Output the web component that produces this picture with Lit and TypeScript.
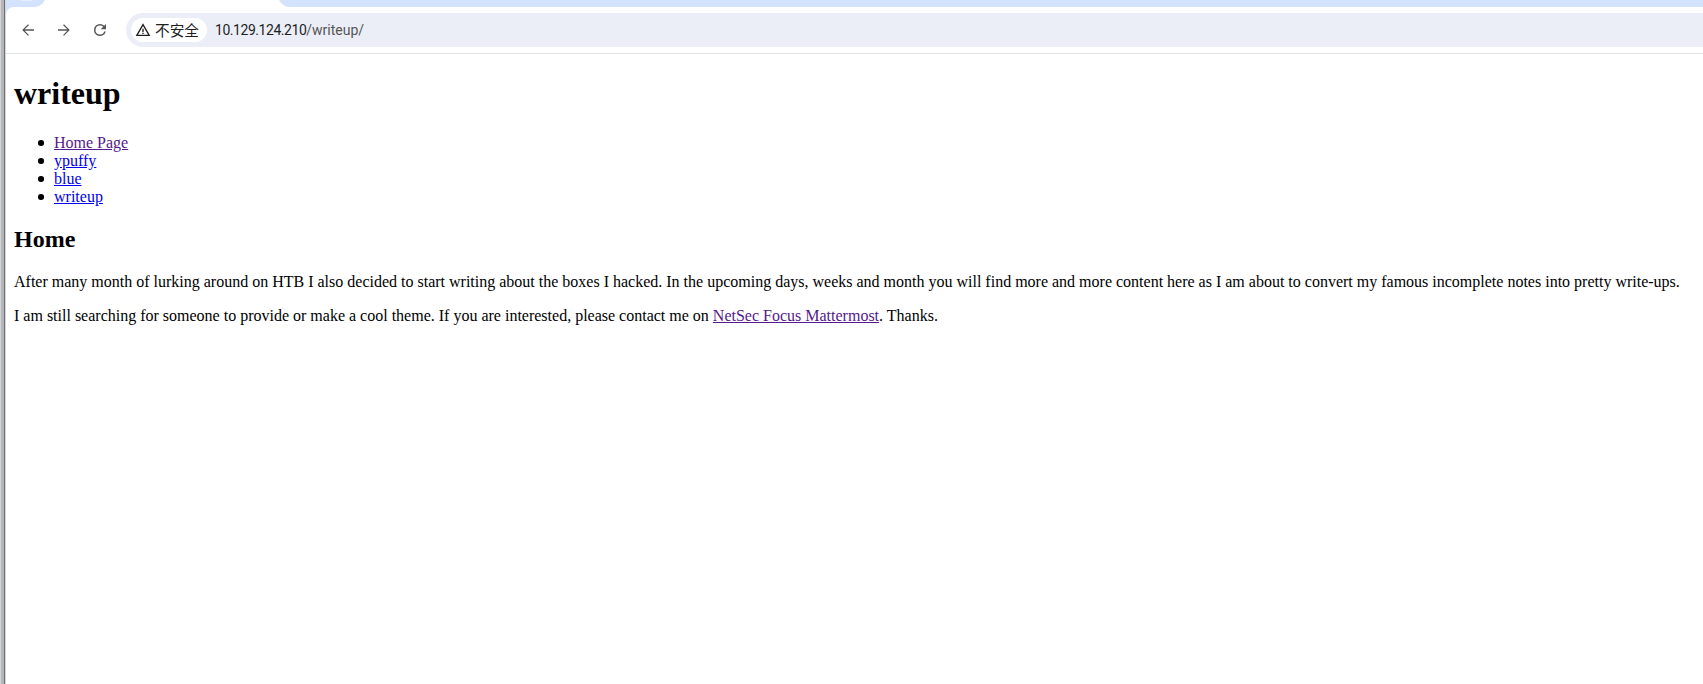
import { LitElement, html, css } from "lit";
import { customElement } from "lit/decorators.js";

@customElement("app-root")
export class AppRoot extends LitElement {
  static styles = css`
    :host { display: flex; height: 684px; width: 1703px; overflow: hidden; background: #fff; font-family: "Liberation Serif", serif; font-size: 16px; color: #000; }
    .edge { width: 6px; flex: none; display: flex; }
    .edge i { display: block; }
    .edge .a { width: 1px; background: #d4d5d9; }
    .edge .b { width: 3px; background: #b5b6ba; }
    .edge .c { width: 1px; background: #6e6f73; }
    .edge .d { width: 1px; background: #d6d7db; }
    .win { flex: 1; min-width: 0; display: flex; flex-direction: column; }
    .tabs { height: 7px; flex: none; background: #fff; position: relative; }
    .clip { position: absolute; inset: 0; overflow: hidden; }
    .tab-l { position: absolute; left: 0; top: -12px; width: 40px; height: 19px; background: #d3e3fd; border-radius: 0 0 12px 0; }
    .tab-l::after { content: ""; position: absolute; left: 12px; top: 0; width: 17px; height: 13px; background: #e8eefb; border-radius: 0 0 5px 5px; }
    .tab-r { position: absolute; left: 272px; right: 0; top: -12px; height: 19px; background: #d3e3fd; border-radius: 0 0 0 12px; }
    .corner { position: absolute; left: 0; top: 7px; width: 8px; height: 8px; background: radial-gradient(circle at 100% 100%, #fff 7.5px, #d3e3fd 8.5px); }
    .bar { height: 47px; flex: none; box-sizing: border-box; display: flex; align-items: center; padding: 0 0 0 4px; border-bottom: 1px solid #e1e2e5; }
    .nav { width: 36px; height: 36px; display: flex; align-items: center; justify-content: center; flex: none; }
    .nav svg { width: 18px; height: 18px; display: block; fill: #555; }
    .omni { margin-left: 8px; flex: 1; height: 34px; background: #ebeef7; border-radius: 17px 0 0 17px; display: flex; align-items: center; padding-left: 5px; }
    .chip { height: 24px; border-radius: 12px; background: #fff; display: flex; align-items: center; padding: 0 8px 0 4px; gap: 4px; color: #1f1f1f; font-family: "Noto Sans CJK SC", sans-serif; font-size: 14.67px; line-height: 24px; }
    .chip svg { width: 16px; height: 16px; display: block; fill: #1f1f1f; }
    .url { margin-left: 8px; color: #1f1f1f; white-space: nowrap; font-family: Roboto, "Noto Sans", sans-serif; font-size: 14px; letter-spacing: -0.45px; }
    .url span { color: #555; letter-spacing: 0; }
    .page { flex: 1; padding: 0 8px 8px; min-height: 0; line-height: normal; }
    h1 { font-size: 2em; font-weight: bold; margin: 21.44px 0; }
    h2 { font-size: 1.5em; font-weight: bold; margin: 19.92px 0; }
    ul { margin: 16px 0; padding-left: 40px; list-style: none; }
    li { position: relative; }
    li::before { content: ""; position: absolute; left: -16px; top: 6.5px; width: 5.6px; height: 5.6px; border-radius: 50%; background: #000; }
    p { margin: 16px 0; }
    a { color: #0000ee; text-decoration: underline; }
    a.v { color: #551a8b; }
  `;

  render() {
    return html`
      <div class="edge"><i class="a"></i><i class="b"></i><i class="c"></i><i class="d"></i></div>
      <div class="win">
        <div class="tabs"><div class="clip"><div class="tab-l"></div><div class="tab-r"></div></div><div class="corner"></div></div>
        <div class="bar">
          <div class="nav"><svg viewBox="0 0 24 24"><path d="M20 11.1H7.6l5.6-5.6L12 4.3 4.3 12l7.7 7.7 1.2-1.2-5.6-5.6H20z"/></svg></div>
          <div class="nav"><svg viewBox="0 0 24 24"><path d="M4 11.1h12.4l-5.6-5.6L12 4.3l7.7 7.7-7.7 7.7-1.2-1.2 5.6-5.6H4z"/></svg></div>
          <div class="nav"><svg viewBox="0 0 24 24"><path d="M17.65 6.35A7.95 7.95 0 0 0 12 4a8 8 0 1 0 7.73 10h-2.08A6 6 0 1 1 12 6c1.66 0 3.14.69 4.22 1.78L13 11h7V4l-2.35 2.35z"/></svg></div>
          <div class="omni">
            <div class="chip"><svg viewBox="0 0 24 24"><path d="M1 21h22L12 2 1 21zm3.47-2L12 6l7.53 13H4.47zM11 16h2v2h-2zm0-6h2v5h-2z"/></svg>不安全</div>
            <div class="url">10.129.124.210<span>/writeup/</span></div>
          </div>
        </div>
        <div class="page">
          <h1>writeup</h1>
          <ul>
            <li><a class="v" href="#">Home Page</a></li>
            <li><a href="#">ypuffy</a></li>
            <li><a href="#">blue</a></li>
            <li><a href="#">writeup</a></li>
          </ul>
          <h2>Home</h2>
          <p>After many month of lurking around on HTB I also decided to start writing about the boxes I hacked. In the upcoming days, weeks and month you will find more and more content here as I am about to convert my famous incomplete notes into pretty write-ups.</p>
          <p>I am still searching for someone to provide or make a cool theme. If you are interested, please contact me on <a class="v" href="#">NetSec Focus Mattermost</a>. Thanks.</p>
        </div>
      </div>
    `;
  }
}
